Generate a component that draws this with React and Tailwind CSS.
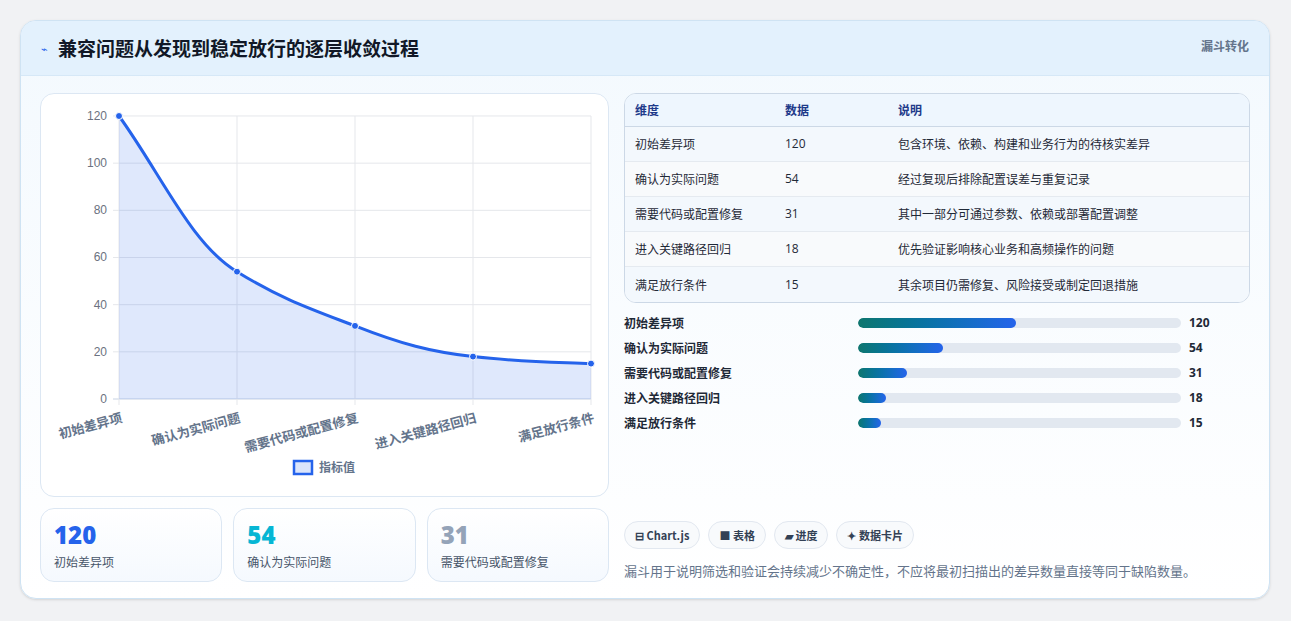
const font = { fontFamily: '"Noto Sans CJK SC", "Noto Sans", sans-serif' };
const rows = [
  ["初始差异项", 120, "包含环境、依赖、构建和业务行为的待核实差异", 49],
  ["确认为实际问题", 54, "经过复现后排除配置误差与重复记录", 26.3],
  ["需要代码或配置修复", 31, "其中一部分可通过参数、依赖或部署配置调整", 15.2],
  ["进入关键路径回归", 18, "优先验证影响核心业务和高频操作的问题", 8.7],
  ["满足放行条件", 15, "其余项目仍需修复、风险接受或制定回退措施", 7.1],
];
const pts = [[78, 22], [196, 177.7], [314, 231.9], [432, 262.6], [550, 269.6]];
function Chart() {
  const line = "M78,22 C120,80 150,150 196,177.7 C240,205 270,215 314,231.9 C360,250 390,258 432,262.6 C480,268 510,268 550,269.6";
  return (
    <svg width="568" height="403" className="block">
      {[0, 1, 2, 3, 4, 5, 6].map(i => {
        const y = 305 - i * 47.17;
        return (
          <g key={i}>
            <line x1="72" x2="550" y1={y} y2={y} stroke={i === 0 ? "#c7d2e3" : "#e5e7eb"} />
            <text x="66" y={y + 4} textAnchor="end" fontSize="12" fill="#6b7280" fontFamily="Liberation Sans, sans-serif">{i * 20}</text>
          </g>
        );
      })}
      {pts.map(([x], i) => <line key={i} x1={x} x2={x} y1="22" y2="311" stroke="#e5e7eb" />)}
      <path d={line + " L550,305 L78,305 Z"} fill="#2563eb" fillOpacity="0.15" />
      <path d={line} fill="none" stroke="#2563eb" strokeWidth="3" />
      {pts.map(([x, y], i) => <circle key={i} cx={x} cy={y} r="3.5" fill="#2563eb" stroke="#fff" strokeWidth="1" />)}
      {rows.map((r, i) => (
        <text key={i} x={pts[i][0] + 4} y="328" textAnchor="end" fontSize="13" fontWeight="600" fill="#64748b"
          transform={`rotate(-15 ${pts[i][0] + 4} 328)`} style={font}>{r[0]}</text>
      ))}
      <rect x="253" y="367" width="18" height="13" fill="#dbe5fb" stroke="#2563eb" strokeWidth="2.5" />
      <text x="278" y="378" fontSize="12" fontWeight="600" fill="#64748b" style={font}>指标值</text>
    </svg>
  );
}
export default function App() {
  return (
    <div className="w-[1291px] h-[621px] bg-[#f1f2f4] p-[20px] pb-0" style={font}>
      <div className="w-[1250px] h-[579px] rounded-[16px] border border-[#cfe3f3] bg-gradient-to-b from-[#f3f9fe] to-white overflow-hidden shadow-sm">
        <div className="h-[55px] bg-[#e3f1fd] border-b border-[#d6e8f7] flex items-center justify-between px-[20px]">
          <div className="flex items-center gap-[10px]">
            <span className="text-[#2563eb] text-[11px]">⌁</span>
            <span className="text-[19px] font-bold text-[#111827]">兼容问题从发现到稳定放行的逐层收敛过程</span>
          </div>
          <span className="text-[12px] font-bold text-[#64748b] self-start mt-[16px]">漏斗转化</span>
        </div>
        <div className="flex gap-[15px] px-[19px] pt-[17px]">
          <div className="w-[569px] flex flex-col gap-[11px]">
            <div className="h-[404px] rounded-[14px] border border-[#dce7f3] bg-white"><Chart /></div>
            <div className="grid grid-cols-3 gap-[11px]">
              {[["120", "text-[#2563eb]", "初始差异项"], ["54", "text-[#06b6d4]", "确认为实际问题"], ["31", "text-[#94a3b8]", "需要代码或配置修复"]].map(([v, c, l]) => (
                <div key={v} className="h-[74px] rounded-[14px] border border-[#dce7f3] bg-gradient-to-b from-white to-[#f5f9fe] px-[13px] pt-[11px]">
                  <div className={`text-[24px] leading-[30px] font-extrabold ${c}`} style={{ fontFamily: '"Open Sans", sans-serif' }}>{v}</div>
                  <div className="text-[12px] text-[#475569] mt-[3px]">{l}</div>
                </div>
              ))}
            </div>
          </div>
          <div className="w-[628px] flex flex-col">
            <div className="rounded-[12px] border border-[#ccd8e6] overflow-hidden bg-white">
              <div className="h-[33px] flex items-center bg-[#eef6fe] border-b border-[#ccd8e6] text-[12px] font-bold text-[#1e3a8a]">
                <div className="w-[160px] pl-[10px]">维度</div><div className="w-[113px]">数据</div><div>说明</div>
              </div>
              {rows.map((r, i) => (
                <div key={i} className={`h-[35px] flex items-center text-[12px] text-[#1f2937] ${i % 2 ? "bg-[#f8fafc]" : "bg-[#f3f8fd]"} ${i < 4 ? "border-b border-[#e5eaf0]" : ""}`}>
                  <div className="w-[160px] pl-[10px]">{r[0]}</div>
                  <div className="w-[113px]" style={{ fontFamily: '"Open Sans", sans-serif' }}>{r[1]}</div>
                  <div>{r[2]}</div>
                </div>
              ))}
            </div>
            <div className="flex flex-col gap-[11px] mt-[13px]">
              {rows.map((r, i) => (
                <div key={i} className="flex items-center h-[14px] text-[12px] font-semibold text-[#1f2937]">
                  <div className="w-[234px]">{r[0]}</div>
                  <div className="w-[323px] h-[10px] rounded-full bg-[#e2e8f0] overflow-hidden">
                    <div className="h-full rounded-full bg-gradient-to-r from-[#0f766e] to-[#2563eb]" style={{ width: `${r[3]}%` }} />
                  </div>
                  <div className="ml-[8px] font-bold text-[12px]" style={{ fontFamily: '"Open Sans", sans-serif' }}>{r[1]}</div>
                </div>
              ))}
            </div>
            <div className="flex gap-[8px] mt-[91px]">
              {["⊟ Chart.js", "■ 表格", "▰ 进度", "✦ 数据卡片"].map(t => (
                <div key={t} className="h-[28px] px-[10px] rounded-full border border-[#e2e8f0] bg-[#f8fafc] flex items-center text-[11px] font-bold text-[#334155]">{t}</div>
              ))}
            </div>
            <div className="mt-[12px] text-[13px] text-[#64748b]">漏斗用于说明筛选和验证会持续减少不确定性，不应将最初扫描出的差异数量直接等同于缺陷数量。</div>
          </div>
        </div>
      </div>
    </div>
  );
}
